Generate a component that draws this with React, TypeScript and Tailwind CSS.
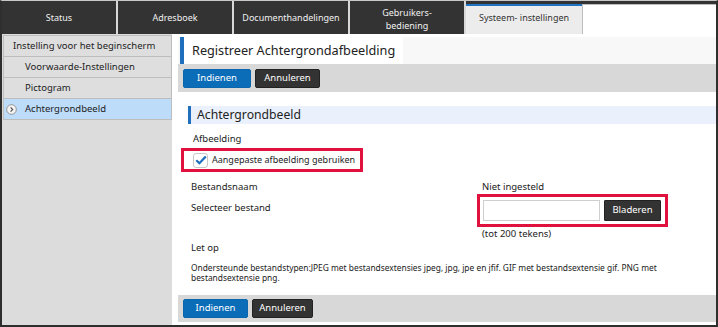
import React from "react";

const font = { fontFamily: '"Noto Sans", "Open Sans", sans-serif' };

function Tab({ children, extra }: { children: React.ReactNode; extra?: string }) {
  return (
    <div
      className={`w-[116px] h-full flex flex-col items-center justify-center text-center text-[9px] leading-[11px] text-[#f0f0f0] border-r-2 border-[#d8d8d8] shrink-0 ${
        extra ?? ""
      }`}
    >
      {children}
    </div>
  );
}

function SideItem({ children, indent, active }: { children: React.ReactNode; indent?: boolean; active?: boolean }) {
  return (
    <div
      className={`relative h-[22px] -mt-px flex items-center border border-[#bdbdbd] text-[9.5px] text-[#222] whitespace-nowrap ${
        active ? "bg-[#bddcfa]" : "bg-[#dedede]"
      } ${indent ? "pl-[21px]" : "pl-[9px]"}`}
    >
      {active && (
        <svg className="absolute left-[2px] top-[5px]" width="11" height="11" viewBox="0 0 11 11">
          <circle cx="5.5" cy="5.5" r="4.8" fill="#f4f4f4" stroke="#8a8a8a" strokeWidth="0.9" />
          <path d="M4.6 3.4 L6.7 5.5 L4.6 7.6" fill="none" stroke="#555" strokeWidth="1.2" />
        </svg>
      )}
      {children}
    </div>
  );
}

function Btn({ children, blue, w }: { children: React.ReactNode; blue?: boolean; w: string }) {
  return (
    <div
      className={`${w} h-[19px] rounded-[2px] flex items-center justify-center text-[9.5px] text-white ${
        blue ? "bg-[#0b6db8] border border-[#0a66ad]" : "bg-[#333] border border-[#222]"
      }`}
    >
      {children}
    </div>
  );
}

export default function App() {
  return (
    <div
      style={font}
      className="w-[718px] h-[327px] bg-white border-l-2 border-r-2 border-b-2 border-[#2e2e2e] border-t border-t-[#c8c8c8] flex flex-col overflow-hidden"
    >
      {/* Tabs */}
      <div className="h-[33px] bg-[#333] flex items-end shrink-0">
        <Tab>Status</Tab>
        <Tab>Adresboek</Tab>
        <Tab>Documenthandelingen</Tab>
        <Tab extra="pt-[4px]">
          <div className="h-[12.5px] leading-[12.5px]">Gebruikers-</div>
          <div className="h-[12.5px] leading-[12.5px]">bediening</div>
        </Tab>
        <div className="w-[116px] h-[30px] bg-[#ececec] border-t-2 border-[#1f73c2] flex items-center justify-center text-[9px] text-[#333] shrink-0">
          <span className="-mt-[4px]">Systeem- instellingen</span>
        </div>
        <div className="flex-1 h-[30px] bg-white border-t border-l border-[#bdbdbd]" />
      </div>

      {/* Body */}
      <div className="flex flex-1 min-h-0">
        {/* Sidebar */}
        <div className="w-[170px] bg-[#dcdcdc] pt-[2px] pl-px shrink-0">
          <SideItem>Instelling voor het beginscherm</SideItem>
          <SideItem indent>Voorwaarde-Instellingen</SideItem>
          <SideItem indent>Pictogram</SideItem>
          <SideItem indent active>
            Achtergrondbeeld
          </SideItem>
        </div>

        {/* Main */}
        <div className="flex-1 ml-[6px] flex flex-col text-[9.5px] text-[#222] whitespace-nowrap">
          {/* Header */}
          <div className="mt-[3px] h-[27px] bg-[#f8f8f8] flex">
            <div className="ml-[2px] w-[4px] bg-[#1f6fbd]" />
            <div className="bg-white pl-[8px] pr-[8px] flex items-center text-[12.7px] text-[#222]">
              Registreer Achtergrondafbeelding
            </div>
          </div>
          {/* Button bar */}
          <div className="h-[28px] bg-[#d8d8d8] flex items-center gap-[4px] pl-[5px]">
            <Btn blue w="w-[68px]">Indienen</Btn>
            <Btn w="w-[65px]">Annuleren</Btn>
          </div>

          {/* Section heading */}
          <div className="mt-[14px] ml-[10px] h-[18px] bg-[#eaf1fc] flex">
            <div className="w-[3px] bg-[#1f6fbd]" />
            <div className="pl-[6px] flex items-center text-[12.2px] text-[#222]">Achtergrondbeeld</div>
          </div>

          <div className="mt-[9px] ml-[15px] h-[12px] leading-[12px]">Afbeelding</div>

          <div className="mt-[3px] ml-[3px] w-[182px] h-[24px] border-[3px] border-[#e1113e] flex items-center pl-[9px]">
            <div className="w-[15px] h-[15px] bg-white border border-[#c8c8c8] rounded-[3px] flex items-center justify-center shrink-0">
              <svg width="12" height="10" viewBox="0 0 12 10">
                <path d="M1.3 5.2 L4.4 8.2 L10.8 1.5" fill="none" stroke="#1a6fc0" strokeWidth="2.2" />
              </svg>
            </div>
            <span className="ml-[4px] text-[9px]">Aangepaste afbeelding gebruiken</span>
          </div>

          <div className="mt-[9px] flex h-[12px] leading-[12px]">
            <div className="w-[304px] pl-[13px]">Bestandsnaam</div>
            <div>Niet ingesteld</div>
          </div>

          <div className="mt-[1px] flex">
            <div className="w-[299px] pl-[13px] pt-[8px] leading-[12px]">Selecteer bestand</div>
            <div className="w-[191px] h-[33px] border-[3px] border-[#e1113e] flex items-center pl-[3px] gap-[4px]">
              <div className="w-[117px] h-[21px] bg-white border border-[#cfcfcf]" />
              <div className="w-[57px] h-[21px] bg-[#333] border border-[#222] rounded-[1px] text-white flex items-center justify-center">
                Bladeren
              </div>
            </div>
          </div>

          <div className="mt-[1px] pl-[304px] h-[12px] leading-[12px]">(tot 200 tekens)</div>

          <div className="mt-[2px] pl-[13px] h-[12px] leading-[12px]">Let op</div>

          <div className="mt-[9px] pl-[13px] leading-[9.5px] text-[8.4px]">
            Ondersteunde bestandstypen:JPEG met bestandsextensies jpeg, jpg, jpe en jfif. GIF met bestandsextensie gif. PNG met
            <br />
            bestandsextensie png.
          </div>

          <div className="mt-auto mb-[3px] h-[27px] bg-[#d8d8d8] flex items-center gap-[4px] pl-[5px]">
            <Btn blue w="w-[65px]">Indienen</Btn>
            <Btn w="w-[61px]">Annuleren</Btn>
          </div>
        </div>
      </div>
    </div>
  );
}
